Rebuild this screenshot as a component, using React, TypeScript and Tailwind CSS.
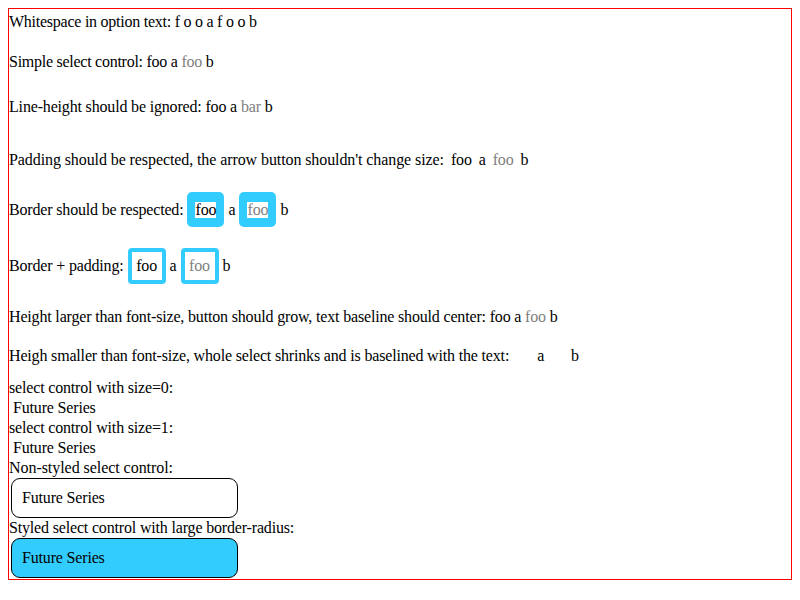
import React from "react";

const Gray = ({ children }: { children: React.ReactNode }) => <span className="text-[#808080]">{children}</span>;

function Row({ className = "", children }: { className?: string; children: React.ReactNode }) {
  return <div className={`flex h-[20px] items-center whitespace-pre leading-[20px] ${className}`}>{children}</div>;
}

// thick blue frame, white field in the middle
function BorderBox({ children }: { children: React.ReactNode }) {
  return (
    <span className="inline-flex h-[35px] w-[37px] items-center justify-center rounded-[5px] bg-[#33ccff]">
      <span className="flex h-[16px] w-[21px] items-center justify-center bg-white leading-[16px]">{children}</span>
    </span>
  );
}

function PaddedBox({ children }: { children: React.ReactNode }) {
  return (
    <span className="inline-flex h-[36px] w-[38px] items-center justify-center rounded-[4px] border-[4px] border-[#33ccff] bg-white">
      {children}
    </span>
  );
}

function FutureBox({ styled }: { styled?: boolean }) {
  return (
    <div
      className={`ml-[2px] flex h-[40px] w-[227px] items-center rounded-[9px] border border-black pl-[10px] ${styled ? "bg-[#33ccff]" : "bg-white"}`}
    >
      Future Series
    </div>
  );
}

export default function App() {
  return (
    <div className="min-h-[600px] bg-white pt-[8px] font-['Liberation_Serif',serif] text-[16px] tracking-[-0.17px] text-black">
      <div className="mx-[8px] flex h-[572px] w-[784px] flex-col border border-[#ff0000]">
        <Row className="mt-[3px] tracking-[-0.25px]">Whitespace in option text: f o o a f o o b</Row>
        <Row className="mt-[20px] tracking-[-0.26px]">
          Simple select control: foo a <Gray>foo</Gray> b
        </Row>
        <Row className="mt-[25px]">
          Line-height should be ignored: foo a <Gray>bar</Gray> b
        </Row>
        <Row className="mt-[33px] gap-[4px]">
          <span className="tracking-[-0.09px]">Padding should be respected, the arrow button shouldn't change size:</span>
          <span className="px-[3px]">foo</span>
          <span>a</span>
          <span className="px-[3px] text-[#808080]">foo</span>
          <span>b</span>
        </Row>
        <div className="mt-[22px] flex h-[35px] items-center gap-[4px] leading-[20px]">
          <span>Border should be respected:</span>
          <BorderBox>foo</BorderBox>
          <span>a</span>
          <BorderBox>
            <Gray>foo</Gray>
          </BorderBox>
          <span>b</span>
        </div>
        <div className="mt-[21px] flex h-[36px] items-center gap-[4px] leading-[20px]">
          <span>Border + padding:</span>
          <PaddedBox>foo</PaddedBox>
          <span>a</span>
          <PaddedBox>
            <Gray>foo</Gray>
          </PaddedBox>
          <span>b</span>
        </div>
        <Row className="mt-[23px]">
          Height larger than font-size, button should grow, text baseline should center: foo a <Gray>foo</Gray> b
        </Row>
        <Row className="mt-[19px] gap-[4px]">
          <span>Heigh smaller than font-size, whole select shrinks and is baselined with the text:</span>
          <span className="w-[20px]" />
          <span>a</span>
          <span className="w-[19px]" />
          <span>b</span>
        </Row>
        <Row className="mt-[12px]">select control with size=0:</Row>
        <Row className="pl-[4px]">Future Series</Row>
        <Row>select control with size=1:</Row>
        <Row className="h-[19px] pl-[4px]">Future Series</Row>
        <Row className="tracking-[-0.05px]">Non-styled select control:</Row>
        <FutureBox />
        <Row>Styled select control with large border-radius:</Row>
        <FutureBox styled />
      </div>
    </div>
  );
}
